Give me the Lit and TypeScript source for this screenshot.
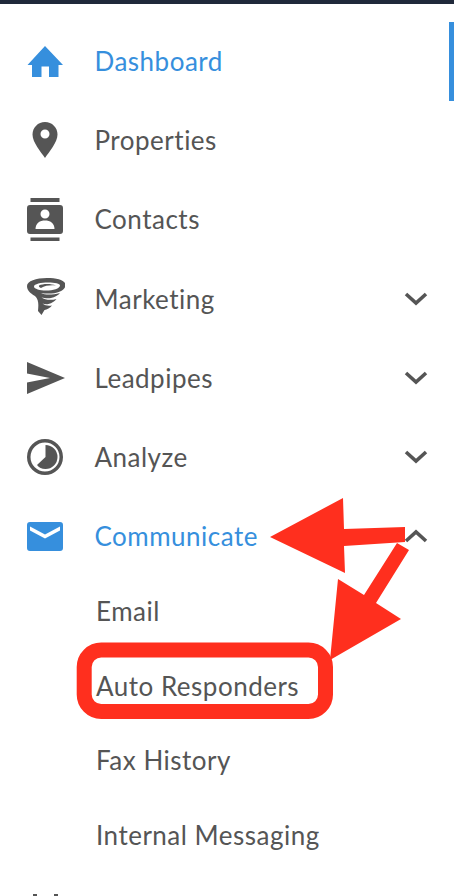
import { LitElement, html, css, svg } from 'lit';
import { customElement } from 'lit/decorators.js';

const ICONS: Record<string, unknown> = {
  home: svg`<path d="M18 0 L36 19 L31.5 19 L31.5 31 L22 31 L22 20.5 L14.5 20.5 L14.5 31 L5 31 L5 19 L0.5 19 Z"/>`,
  pin: svg`<path fill-rule="evenodd" d="M18 0 C25 0 30.5 5.5 30.5 12.5 C30.5 20.5 22 30 18 36 C14 30 5.5 20.5 5.5 12.5 C5.5 5.5 11 0 18 0 Z M18 7.5 A4.5 4.5 0 1 0 18 16.5 A4.5 4.5 0 1 0 18 7.5 Z"/>`,
  contacts: svg`<rect x="3.5" y="0" width="29" height="4"/><rect x="3.5" y="39.5" width="29" height="3.5"/><path fill-rule="evenodd" d="M3 7 H33 Q36 7 36 10 V33 Q36 36 33 36 H3 Q0 36 0 33 V10 Q0 7 3 7 Z M18 11.5 A4.5 4.5 0 1 0 18 20.5 A4.5 4.5 0 1 0 18 11.5 Z M8.5 31 H27.5 C27.5 25 23 22.5 18 22.5 C13 22.5 8.5 25 8.5 31 Z"/>`,
  tornado: svg`<path fill-rule="evenodd" d="M20 0 C31 0 38.5 2.5 38.5 7 C38.5 10 36 12 33 13.5 C27 16 20 16 14 15 C18 17 25 17 33 15 C31 17.5 28 19 24 20 C20.5 20.5 17 20 14.5 19.5 C18 22 24 22.5 29.5 21 C27.5 23.5 25 25 21.5 26 C19 26.5 17 26 15.5 25.5 C18 27.5 21 28 25 27.5 C23 30 20 31.5 17.5 32 L14.5 37 L11 33 C11.5 27 12 22 8 18 C3 15 0 12.5 0 8 C0 3 9 0 20 0 Z M21 4.5 C14 4.5 7 6 7 8.5 C7 11 13 12.5 19 12.5 C26 12.5 33 10.5 33 7.5 C33 5.5 28 4.5 21 4.5 Z"/><path d="M12 7.5 C16 5.5 24 5.5 29 7.5 C24 7 18 7.5 14 10 C12.5 9.5 11.5 8.5 12 7.5 Z"/>`,
  send: svg`<path d="M0 0 L38 16 L0 32 L0 20.5 L23 16 L0 11.5 Z"/>`,
  clock: svg`<path fill-rule="evenodd" d="M18 0 A18 18 0 1 0 18 36 A18 18 0 1 0 18 0 Z M18 3.5 A14.5 14.5 0 1 1 18 32.5 A14.5 14.5 0 1 1 18 3.5 Z"/><path d="M18.5 6 A12 12 0 0 1 18.5 30 C14.5 30 12 28.5 10 26 L18.5 18 Z"/>`,
  mail: svg`<path fill-rule="evenodd" d="M3 0 H33 Q36 0 36 3 V26 Q36 29 33 29 H3 Q0 29 0 26 V3 Q0 0 3 0 Z M3 4.5 L18 12.5 L33 4.5 L33 8.5 L18 16.5 L3 8.5 Z"/>`,
};

const ROWS = [
  { label: 'Dashboard', icon: 'home', h: 31, active: true },
  { label: 'Properties', icon: 'pin', h: 36 },
  { label: 'Contacts', icon: 'contacts', h: 43 },
  { label: 'Marketing', icon: 'tornado', h: 37, lift: true, chevron: 'down' },
  { label: 'Leadpipes', icon: 'send', h: 32, chevron: 'down' },
  { label: 'Analyze', icon: 'clock', h: 36, chevron: 'down' },
  { label: 'Communicate', icon: 'mail', h: 29, active: true, chevron: 'up' },
];

const SUBS = ['Email', 'Auto Responders', 'Fax History', 'Internal Messaging'];

@customElement('app-root')
export class AppRoot extends LitElement {
  static styles = css`
    :host {
      display: block;
      position: relative;
      width: 454px;
      height: 896px;
      overflow: hidden;
      background: #fff;
      font-family: 'Lato', 'Liberation Sans', sans-serif;
      color: #555;
    }
    .topbar { height: 4px; background: #20293a; }
    .scroll {
      position: absolute;
      top: 22px;
      right: 0;
      width: 5px;
      height: 79px;
      background: #368fdd;
    }
    nav { display: flex; flex-direction: column; padding-top: 17.5px; }
    .row {
      display: flex;
      align-items: center;
      height: 79.2px;
      padding: 0 26px 0 27px;
      font-size: 26px;
      letter-spacing: 0.5px;
    }
    .row.active { color: #368fdd; }
    .icon { width: 38px; display: flex; align-items: center; fill: currentColor; }
    .icon svg { display: block; }
    .icon.lift { margin-top: -5px; }
    .label { flex: 1; margin-left: 29.5px; }
    .chev { width: 24px; height: 14px; fill: none; stroke: #555; stroke-width: 3.6; }
    .subs { display: flex; flex-direction: column; margin-top: -2px; }
    .sub {
      display: flex;
      align-items: center;
      height: 74.5px;
      padding-left: 96px;
      font-size: 26px;
      letter-spacing: 0.5px;
    }
    .next { display: flex; gap: 17px; padding: 22px 0 0 33px; }
    .next span { width: 4px; height: 6px; background: #555; }
    .marks {
      position: absolute;
      inset: 0;
      width: 454px;
      height: 896px;
      pointer-events: none;
    }
  `;

  render() {
    return html`
      <div class="topbar"></div>
      <div class="scroll"></div>
      <nav>
        ${ROWS.map(r => html`
          <div class="row ${r.active ? 'active' : ''}">
            <span class="icon ${r.lift ? 'lift' : ''}">
              <svg width="38" height=${r.h} viewBox="0 0 38 ${r.h}">${ICONS[r.icon]}</svg>
            </span>
            <span class="label">${r.label}</span>
            ${r.chevron ? html`
              <svg class="chev" viewBox="0 0 24 14">
                <path d=${r.chevron === 'up' ? 'M2 12 L12 3 L22 12' : 'M2 2 L12 11 L22 2'}></path>
              </svg>` : ''}
          </div>
        `)}
      </nav>
      <div class="subs">
        ${SUBS.map(s => html`<div class="sub">${s}</div>`)}
      </div>
      <div class="next"><span></span><span></span></div>
      <svg class="marks" viewBox="0 0 454 896">
        <path fill="#ff2f1e" d="M270 537 L343 498 L344 529 L405 527 L405 542 L344 546 L345 573 Z" />
        <path fill="#ff2f1e" d="M397 543 L409 550 L376 603 L401 619 L330 660 L338 579 L364 595 Z" />
        <rect x="84.2" y="650" width="241.3" height="61.5" rx="17" fill="none" stroke="#ff2f1e" stroke-width="15" />
      </svg>
    `;
  }
}
